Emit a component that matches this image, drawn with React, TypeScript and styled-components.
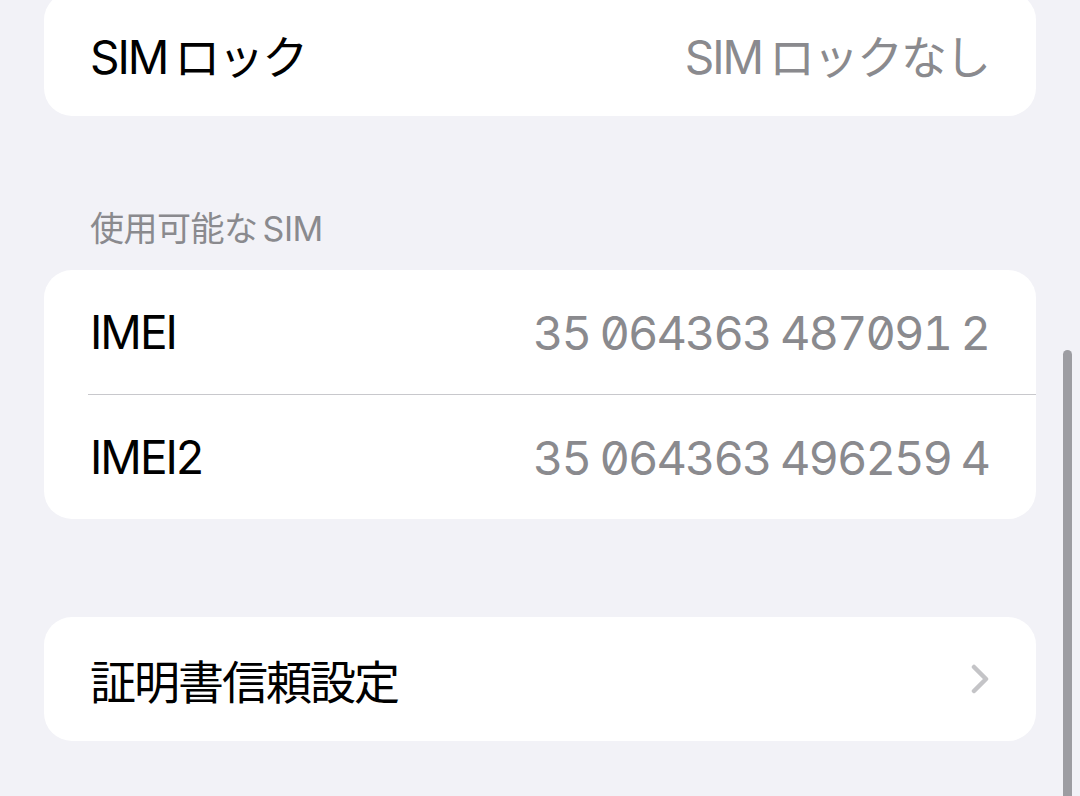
import React, { FC } from 'react';
import styled, { createGlobalStyle } from 'styled-components';

const GlobalStyle = createGlobalStyle`
	html, body {
		margin: 0;
		padding: 0;
		background: #f2f2f7;
		overflow: hidden;
	}
	body {
		font-family: Inter, 'Noto Sans CJK JP', sans-serif;
		-webkit-font-smoothing: antialiased;
	}
`;

const Screen = styled.div`
	position: relative;
	width: 1080px;
	height: 796px;
	overflow: hidden;
	background: #f2f2f7;
`;

const List = styled.main`
	display: flex;
	flex-direction: column;
	padding: 0 44px;
	margin-top: -8px;
`;

const Card = styled.section<{ $gap?: number }>`
	background: #ffffff;
	border-radius: 28px;
	overflow: hidden;
	margin-top: ${(p) => p.$gap ?? 0}px;
`;

const SectionHeader = styled.h3`
	margin: 92px 0 20px;
	padding-left: 46px;
	height: 42px;
	line-height: 42px;
	font-size: 34px;
	font-weight: 400;
	letter-spacing: -0.5px;
	word-spacing: -4px;
	color: #8a8a8e;
`;

const Row = styled.div`
	display: flex;
	align-items: center;
	justify-content: space-between;
	height: 124px;
	padding: 0 47px 0 46px;
	box-sizing: border-box;
`;

const Label = styled.span`
	font-size: 46px;
	font-weight: 400;
	letter-spacing: -2px;
	word-spacing: -4px;
	color: #000000;
`;

const Value = styled.span<{ $numeric?: boolean }>`
	font-size: ${(p) => (p.$numeric ? 47 : 46)}px;
	letter-spacing: -2px;
	word-spacing: ${(p) => (p.$numeric ? '-1px' : '-4px')};
	font-feature-settings: ${(p) => (p.$numeric ? "'tnum' 1, 'zero' 1" : 'normal')};
	color: #8a8a8e;
`;

const Divider = styled.div`
	height: 1px;
	margin-left: 44px;
	background: #c8c8cc;
`;

const Chevron = styled.svg`
	width: 18px;
	height: 30px;
	flex: none;
`;

const ScrollIndicator = styled.div`
	position: absolute;
	top: 350px;
	right: 8px;
	width: 9px;
	height: 480px;
	border-radius: 5px;
	background: #9d9da2;
`;

const imeis = [
	{ label: 'IMEI', value: '35 064363 487091 2' },
	{ label: 'IMEI2', value: '35 064363 496259 4' },
];

const App: FC = () => (
	<>
		<GlobalStyle />
		<Screen>
			<List>
				<Card>
					<Row>
						<Label>SIM ロック</Label>
						<Value>SIM ロックなし</Value>
					</Row>
				</Card>

				<SectionHeader>使用可能な SIM</SectionHeader>
				<Card>
					{imeis.map((item, i) => (
						<React.Fragment key={item.label}>
							{i > 0 && <Divider />}
							<Row>
								<Label>{item.label}</Label>
								<Value $numeric>{item.value}</Value>
							</Row>
						</React.Fragment>
					))}
				</Card>

				<Card $gap={98}>
					<Row>
						<Label>証明書信頼設定</Label>
						<Chevron viewBox="0 0 18 30">
							<polyline
								points="3,3 15,15 3,27"
								fill="none"
								stroke="#c4c4c7"
								strokeWidth="4.5"
								strokeLinecap="round"
								strokeLinejoin="round"
							/>
						</Chevron>
					</Row>
				</Card>
			</List>
			<ScrollIndicator />
		</Screen>
	</>
);

export default App;
